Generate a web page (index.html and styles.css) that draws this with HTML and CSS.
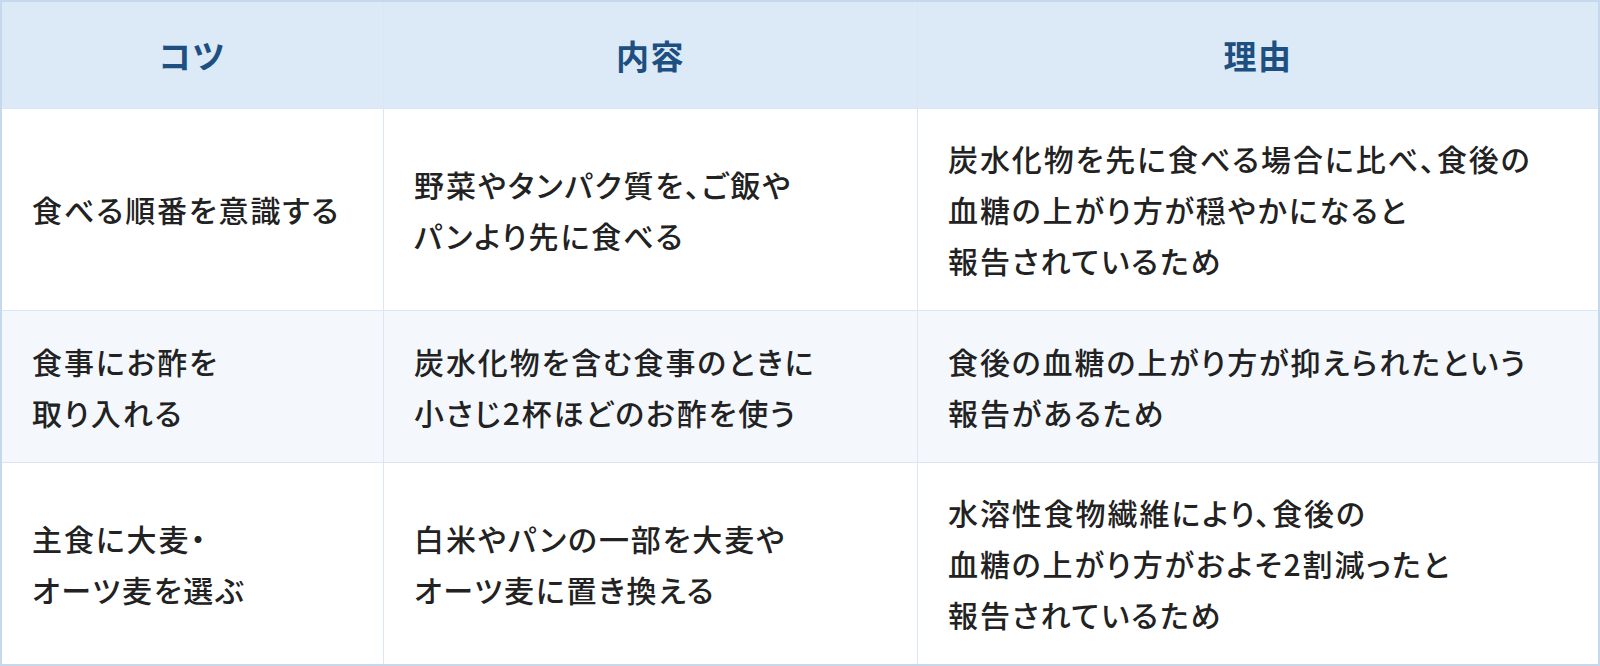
FILE: index.html
```html
<!DOCTYPE html>
<html lang="ja">
<head>
<meta charset="utf-8">
<link rel="stylesheet" href="styles.css">
</head>
<body>
<div class="table">
  <div class="cell head">コツ</div>
  <div class="cell head">内容</div>
  <div class="cell head">理由</div>

  <div class="cell">食べる順番を意識する</div>
  <div class="cell">野菜やタンパク質を、ご飯や<br>パンより先に食べる</div>
  <div class="cell">炭水化物を先に食べる場合に比べ、食後の<br>血糖の上がり方が穏やかになると<br>報告されているため</div>

  <div class="cell alt">食事にお酢を<br>取り入れる</div>
  <div class="cell alt">炭水化物を含む食事のときに<br>小さじ2杯ほどのお酢を使う</div>
  <div class="cell alt">食後の血糖の上がり方が抑えられたという<br>報告があるため</div>

  <div class="cell">主食に大麦・<br>オーツ麦を選ぶ</div>
  <div class="cell">白米やパンの一部を大麦や<br>オーツ麦に置き換える</div>
  <div class="cell">水溶性食物繊維により、食後の<br>血糖の上がり方がおよそ2割減ったと<br>報告されているため</div>
</div>
</body>
</html>
```

FILE: styles.css
```css
html, body {
  margin: 0;
  padding: 0;
  background: #ffffff;
}

.table {
  box-sizing: border-box;
  width: 1600px;
  height: 666px;
  display: grid;
  grid-template-columns: 381px 533px 680px;
  grid-template-rows: 106px 201px 151px 201px;
  gap: 1px;
  border: 2px solid #c6d8eb;
  background: #dbe6f2;
  font-family: "Noto Sans CJK JP", "Noto Sans", sans-serif;
  font-size: 30px;
  font-weight: 500;
  line-height: 51px;
  color: #222222;
  font-feature-settings: "palt";
}

.cell {
  display: flex;
  align-items: center;
  padding: 0 30px;
  background: #ffffff;
  letter-spacing: 1.9px;
}

.cell.alt {
  background: #f4f8fd;
}

.cell.head {
  justify-content: center;
  background: #dce9f7;
  color: #1d4f80;
  font-size: 33px;
  font-weight: 700;
  letter-spacing: 1.5px;
}
```
